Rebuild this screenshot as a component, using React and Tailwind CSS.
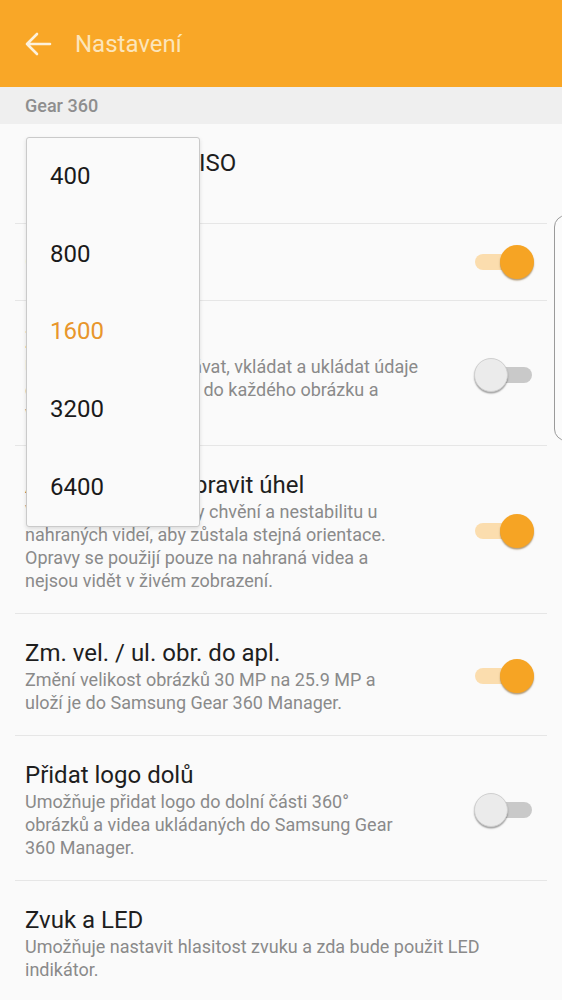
import React from "react";

function Toggle({ on }) {
  return (
    <div className="relative w-[60px] h-[36px] flex items-center shrink-0">
      <div
        className={
          "absolute left-[1px] right-[2px] h-[16px] rounded-full " +
          (on ? "bg-[#FBDDAE]" : "bg-[#C9C9C9]")
        }
      />
      {on ? (
        <div className="absolute right-0 w-[34px] h-[34px] rounded-full bg-[#F6A424] shadow-[0_1.5px_1.5px_rgba(120,80,20,0.55)]" />
      ) : (
        <div className="absolute left-0 w-[34px] h-[34px] rounded-full bg-[#EBEBEB] border border-[#D0D0D0] shadow-[0_1.5px_1.5px_rgba(0,0,0,0.35)]" />
      )}
    </div>
  );
}

function Pre({ w, children }) {
  return <span className={"inline-block whitespace-nowrap " + w}>{children}</span>;
}

function Row({ title, lines, toggle, last, pb = "pb-[21px]" }) {
  return (
    <div
      className={
        "flex items-center pl-[10px] pr-[13px] pt-[24px] " +
        pb +
        " " +
        (last ? "" : "border-b border-[#E6E6E6]")
      }
    >
      <div className="flex-1 min-w-0">
        <div className="text-[24px] leading-[30px] text-[#1E1E1E] whitespace-nowrap">
          {title}
        </div>
        {lines.map((l, i) => (
          <div
            key={i}
            className="text-[18px] leading-[23px] text-[#8A8A8A] whitespace-nowrap"
          >
            {l}
          </div>
        ))}
      </div>
      {toggle !== undefined && <Toggle on={toggle} />}
    </div>
  );
}

export default function App() {
  return (
    <div
      className="relative w-[562px] h-[1000px] overflow-hidden bg-[#FAFAFA]"
      style={{ fontFamily: "Roboto, 'Noto Sans', sans-serif" }}
    >
      {/* Header */}
      <div className="h-[87px] bg-[#F9A727] flex items-center pl-[24px]">
        <svg width="28" height="24" viewBox="0 0 28 24" fill="none">
          <path
            d="M26 12H3M13 2L3 12l10 10"
            stroke="#FDF1DC"
            strokeWidth="2.6"
            strokeLinecap="round"
            strokeLinejoin="round"
          />
        </svg>
        <div className="ml-[23px] text-[24px] text-[#FCE5BA] leading-none">
          Nastavení
        </div>
      </div>

      {/* Section header */}
      <div className="h-[37px] bg-[#EFEFEF] flex items-center pl-[25px] text-[18px] font-medium text-[#8E8E8E]">
        Gear 360
      </div>

      {/* Rows */}
      <div className="px-[15px]">
        <Row
          title={
            <>
              <Pre w="w-[174px]">Maximální limit</Pre>ISO
            </>
          }
          lines={["1600"]}
          pb="pb-[22px]"
        />
        <div className="flex items-center pl-[10px] pr-[13px] pt-[23px] pb-[23px] border-b border-[#E6E6E6]">
          <div className="flex-1 text-[24px] leading-[30px] text-[#1E1E1E]">
            Obrázky HDR
          </div>
          <div className="h-[30px] flex items-center">
            <Toggle on={true} />
          </div>
        </div>
        <Row
          title="Značka polohy"
          lines={[
            <>
              <Pre w="w-[177px]">Umožňuje zaznamená</Pre>vat, vkládat a ukládat údaje
            </>,
            <>
              <Pre w="w-[174px]">o poloze GPS</Pre> do každého obrázku a
            </>,
            "videa.",
          ]}
          toggle={false}
        />
        <Row
          title={
            <>
              <Pre w="w-[169px]">Automaticky o</Pre>pravit úhel
            </>
          }
          lines={[
            <>
              <Pre w="w-[171px]">Vyrovná drobné otřes</Pre>y chvění a nestabilitu u
            </>,
            "nahraných videí, aby zůstala stejná orientace.",
            "Opravy se použijí pouze na nahraná videa a",
            "nejsou vidět v živém zobrazení.",
          ]}
          toggle={true}
        />
        <Row
          title="Zm. vel. / ul. obr. do apl."
          lines={[
            "Změní velikost obrázků 30 MP na 25.9 MP a",
            "uloží je do Samsung Gear 360 Manager.",
          ]}
          toggle={true}
        />
        <Row
          title="Přidat logo dolů"
          lines={[
            "Umožňuje přidat logo do dolní části 360°",
            "obrázků a videa ukládaných do Samsung Gear",
            "360 Manager.",
          ]}
          toggle={false}
        />
        <Row
          title="Zvuk a LED"
          lines={[
            "Umožňuje nastavit hlasitost zvuku a zda bude použit LED",
            "indikátor.",
          ]}
          last
        />
      </div>

      {/* Dropdown menu */}
      <div className="absolute left-[26px] top-[137px] w-[174px] bg-[#FAFAFA] border border-[#CACACA] rounded-[3px] shadow-[0_2px_4px_rgba(0,0,0,0.12)]">
        {["400", "800", "1600", "3200", "6400"].map((v) => (
          <div
            key={v}
            className={
              "h-[77.6px] flex items-center pl-[23px] pb-[1px] text-[24px] " +
              (v === "1600" ? "text-[#E8962B]" : "text-[#1A1A1A]")
            }
          >
            {v}
          </div>
        ))}
      </div>

      {/* Edge panel handle */}
      <div className="absolute left-[554px] top-[215px] w-[20px] h-[226px] border border-[#9A9A9A] rounded-l-[12px] bg-[#FBFBFB]" />
    </div>
  );
}
